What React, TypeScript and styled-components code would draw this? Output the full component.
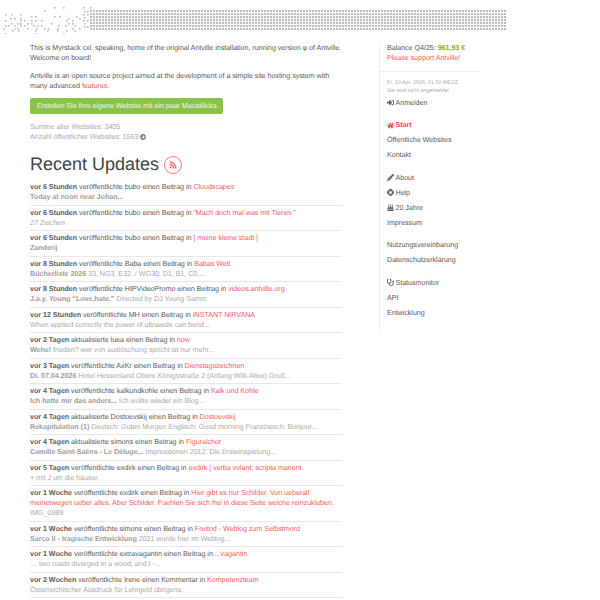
import { createGlobalStyle, styled } from 'styled-components';
import type { ReactNode } from 'react';
import {
  FaArrowCircleRight,
  FaBirthdayCake,
  FaHome,
  FaLifeRing,
  FaPencilAlt,
  FaRss,
  FaSignInAlt,
  FaStethoscope,
} from 'react-icons/fa';

const GlobalStyle = createGlobalStyle`
  html, body {
    margin: 0;
    padding: 0;
    background: #fff;
  }
  body {
    font-family: "Liberation Sans", Arial, sans-serif;
    font-size: 7.2px;
    letter-spacing: -0.06px;
    line-height: 10px;
    color: #5c5c5c;
    text-rendering: geometricPrecision;
  }
`;

const Page = styled.div`
  width: 600px;
  height: 600px;
  overflow: hidden;
`;

const Banner = styled.svg`
  display: block;
  width: 510px;
  height: 34px;
  margin-bottom: 9px;
`;

const Columns = styled.div`
  display: flex;
  align-items: flex-start;
  padding-left: 30px;
`;

const Main = styled.main`
  width: 312px;
  margin-right: 37px;
`;

const Paragraph = styled.p`
  margin: 0;

  & + & {
    margin-top: 8px;
  }
`;

const Link = styled.a`
  color: #ff5a5f;
`;

const CreateButton = styled.a`
  display: block;
  box-sizing: border-box;
  width: 193px;
  height: 16px;
  margin: 7px 0 8px;
  padding-left: 7px;
  border-radius: 2px;
  background: #8bc34a;
  color: #eef7e2;
  line-height: 16px;
`;

const Stats = styled.div`
  color: #aaa;
`;

const StatIcon = styled(FaArrowCircleRight)`
  width: 6px;
  height: 6px;
  margin-left: 2px;
  vertical-align: -1px;
  color: #777;
`;

const Heading = styled.h1`
  display: flex;
  align-items: center;
  gap: 5px;
  height: 24px;
  margin: 10px 0 4px;
  color: #444;
  font-size: 18px;
  font-weight: 400;
  letter-spacing: 0;
  line-height: 24px;
`;

const FeedBadge = styled.span`
  display: flex;
  align-items: center;
  justify-content: center;
  box-sizing: border-box;
  width: 18px;
  height: 18px;
  margin-top: 2px;
  border: 1px solid #ff7a7e;
  border-radius: 50%;
  color: #ff5a5f;
  font-size: 8px;
`;

const UpdateList = styled.ul`
  margin: 0;
  padding: 0;
  list-style: none;
`;

const UpdateItem = styled.li`
  padding: 2px 0 2.5px;
  border-bottom: 1px solid #e8e8e8;
`;

const Age = styled.strong`
  color: #606060;
`;

const Summary = styled.div<{ $italic?: boolean }>`
  color: #aaa;
  font-style: ${(p) => (p.$italic ? 'italic' : 'normal')};

  strong {
    color: #a0a0a0;
  }
`;

const Sidebar = styled.aside`
  box-sizing: border-box;
  width: 101px;
  height: 290px;
  border-left: 1px solid #eee;
`;

const Balance = styled.div`
  padding: 0 0 8px 7px;
  border-bottom: 1px solid #eee;
`;

const Amount = styled.strong`
  color: #7cb518;
`;

const SidebarLink = styled.a`
  display: block;
  color: #ff5a5f;
`;

const Session = styled.div`
  padding: 7px 0 0 7px;
`;

const SmallNote = styled.div`
  color: #aaa;
  font-size: 5.4px;
  letter-spacing: 0;
  line-height: 8px;
`;

const NavGroup = styled.nav`
  margin-top: 7.5px;
  padding-left: 7px;
`;

const NavItem = styled.a<{ $active?: boolean }>`
  display: flex;
  align-items: center;
  gap: 1.5px;
  height: 15px;
  color: ${(p) => (p.$active ? '#ff3f46' : '#5c5c5c')};
  font-weight: ${(p) => (p.$active ? 700 : 400)};

  svg {
    width: 7px;
    height: 7px;
    flex: none;
  }
`;

const scattered: [number, number][] = [
  [5, 14], [11, 14], [20, 14], [44, 10], [54, 7], [63, 7], [83, 7], [90, 7],
  [10, 18], [14, 18], [20, 18], [31, 16], [35, 16], [54, 16], [59, 16], [68, 18], [76, 16], [83, 14],
  [5, 20], [20, 20], [24, 20], [31, 20], [35, 20], [41, 20], [66, 20], [72, 20], [79, 18],
  [11, 23], [17, 23], [20, 23], [27, 23], [31, 23], [51, 23], [68, 23], [72, 23], [83, 20],
  [5, 25], [8, 25], [14, 25], [20, 25], [24, 25], [33, 25], [37, 25], [41, 25], [58, 25], [65, 25], [74, 25],
  [3, 28], [14, 28], [17, 28], [27, 28], [36, 28], [44, 28], [48, 28], [57, 28], [72, 28], [79, 28],
  [12, 30], [18, 30], [35, 30], [47, 30], [57, 30], [66, 30], [74, 30],
  [5, 33], [35, 33], [63, 33],
  [84, 11], [87, 11], [84, 17], [87, 14], [87, 20], [84, 23], [87, 26], [84, 26],
];

function DotBanner() {
  const solid: ReactNode[] = [];
  for (let x = 90; x < 505; x += 3) {
    for (let y = 10; y < 29; y += 3) {
      solid.push(<rect key={`${x}-${y}`} x={x} y={y} width={2} height={2} />);
    }
  }
  return (
    <Banner viewBox="0 0 510 34" fill="#bdbdbd">
      {scattered.map(([x, y]) => (
        <rect key={`s${x}-${y}`} x={x} y={y} width={1.6} height={1.6} />
      ))}
      {solid}
    </Banner>
  );
}

type Update = {
  age: string;
  verb?: string;
  who: string;
  kind?: string;
  site: string;
  lead?: string;
  text?: string;
  italic?: boolean;
};

const updates: Update[] = [
  { age: 'vor 6 Stunden', who: 'bubo', site: 'Cloudscapes', lead: 'Today at noon near Johan...' },
  { age: 'vor 6 Stunden', who: 'bubo', site: '"Mach doch mal was mit Tieren."', text: '27 Zeichen', italic: true },
  { age: 'vor 6 Stunden', who: 'bubo', site: '[ meine kleine stadt ]', lead: 'Zanderij' },
  { age: 'vor 8 Stunden', who: 'Baba', site: 'Babas Welt', lead: 'Bücherliste 2026', text: ' 33, NG3, E32, / WG30, D1, B1, C0,...' },
  { age: 'vor 8 Stunden', who: 'HIPVideoPromo', site: 'videos.antville.org', lead: 'J.a.y. Young “Love.hate.”', text: ' Directed by DJ Young Samm' },
  { age: 'vor 12 Stunden', who: 'MH', site: 'INSTANT NIRVANA', text: 'When applied correctly the power of ultrawide can bend...' },
  { age: 'vor 2 Tagen', verb: 'aktualisierte', who: 'luea', site: 'now', lead: 'Wehe!', text: ' frieden? wer von auslöschung spricht ist nur mehr...' },
  { age: 'vor 3 Tagen', who: 'AxKr', site: 'Dienstagszeichnen', lead: 'Di. 07.04.2026', text: ' Hotel Hessenland Obere Königsstraße 2 (Anfang Willi-Allee) Gruß...' },
  { age: 'vor 4 Tagen', who: 'kalkundkohle', site: 'Kalk und Kohle', lead: 'Ich hatte mir das anders...', text: ' Ich wollte wieder ein Blog...' },
  { age: 'vor 4 Tagen', verb: 'aktualisierte', who: 'Dostoevskij', site: 'Dostoevskij', lead: 'Rekapitulation (1)', text: ' Deutsch: Guten Morgen Englisch: Good morning Französisch: Bonjour...' },
  { age: 'vor 4 Tagen', verb: 'aktualisierte', who: 'simons', site: 'Figuralchor', lead: 'Camille Saint-Saëns - Le Déluge...', text: ' Impressionen 2012: Die Ersteinspielung...' },
  { age: 'vor 5 Tagen', who: 'exdirk', site: 'exdirk | verba volant, scripta manent.', text: '+ mit J um die häuser.' },
  { age: 'vor 1 Woche', who: 'exdirk', site: 'Hier gibt es nur Schilder. Von ueberall meinetwegen ueber alles. Aber Schilder. Fuehlen Sie sich frei in diese Seite welche reinzukleben.', text: 'IMG_0989' },
  { age: 'vor 1 Woche', who: 'simons', site: 'Freitod - Weblog zum Selbstmord', lead: 'Sarco II - tragische Entwicklung', text: ' 2021 wurde hier im Weblog...' },
  { age: 'vor 1 Woche', who: 'extravagantin', site: '...vagantin', text: '… two roads diverged in a wood, and I -...' },
  { age: 'vor 2 Wochen', who: 'Irene', kind: 'einen Kommentar', site: 'Kompetenzteam', text: 'Österreichischer Ausdruck für Lehrgeld übrigens.' },
];

export default function App() {
  return (
    <Page>
      <GlobalStyle />
      <DotBanner />
      <Columns>
        <Main>
          <Paragraph>
            This is Myrstack cxl. speaking, home of the original Antville installation, running version φ of Antville. Welcome on board!
          </Paragraph>
          <Paragraph>
            Antville is an open source project aimed at the development of a simple site hosting system with many advanced <Link>features</Link>.
          </Paragraph>
          <CreateButton>Erstellen Sie Ihre eigene Website mit ein paar Mausklicks.</CreateButton>
          <Stats>
            Summe aller Websites: 3405
            <br />
            Anzahl öffentlicher Websites: 1563
            <StatIcon />
          </Stats>
          <Heading>
            Recent Updates
            <FeedBadge>
              <FaRss />
            </FeedBadge>
          </Heading>
          <UpdateList>
            {updates.map((u) => (
              <UpdateItem key={u.age + u.who + u.site}>
                <Age>{u.age}</Age> {u.verb ?? 'veröffentlichte'} {u.who} {u.kind ?? 'einen Beitrag'} in <Link>{u.site}</Link>
                <Summary $italic={u.italic}>
                  {u.lead && <strong>{u.lead}</strong>}
                  {u.text}
                </Summary>
              </UpdateItem>
            ))}
          </UpdateList>
        </Main>
        <Sidebar>
          <Balance>
            Balance Q4/25: <Amount>961,93 €</Amount>
            <SidebarLink>Please support Antville!</SidebarLink>
          </Balance>
          <Session>
            <SmallNote>Fr. 10 Apr. 2026, 01:50 MESZ</SmallNote>
            <SmallNote>Sie sind nicht angemeldet</SmallNote>
            <NavItem>
              <FaSignInAlt />
              Anmelden
            </NavItem>
          </Session>
          <NavGroup>
            <NavItem $active>
              <FaHome />
              Start
            </NavItem>
            <NavItem>Öffentliche Websites</NavItem>
            <NavItem>Kontakt</NavItem>
          </NavGroup>
          <NavGroup>
            <NavItem>
              <FaPencilAlt />
              About
            </NavItem>
            <NavItem>
              <FaLifeRing />
              Help
            </NavItem>
            <NavItem>
              <FaBirthdayCake />
              20 Jahre
            </NavItem>
            <NavItem>Impressum</NavItem>
          </NavGroup>
          <NavGroup>
            <NavItem>Nutzungsvereinbarung</NavItem>
            <NavItem>Datenschutzerklärung</NavItem>
          </NavGroup>
          <NavGroup>
            <NavItem>
              <FaStethoscope />
              Statusmonitor
            </NavItem>
            <NavItem>API</NavItem>
            <NavItem>Entwicklung</NavItem>
          </NavGroup>
        </Sidebar>
      </Columns>
    </Page>
  );
}
